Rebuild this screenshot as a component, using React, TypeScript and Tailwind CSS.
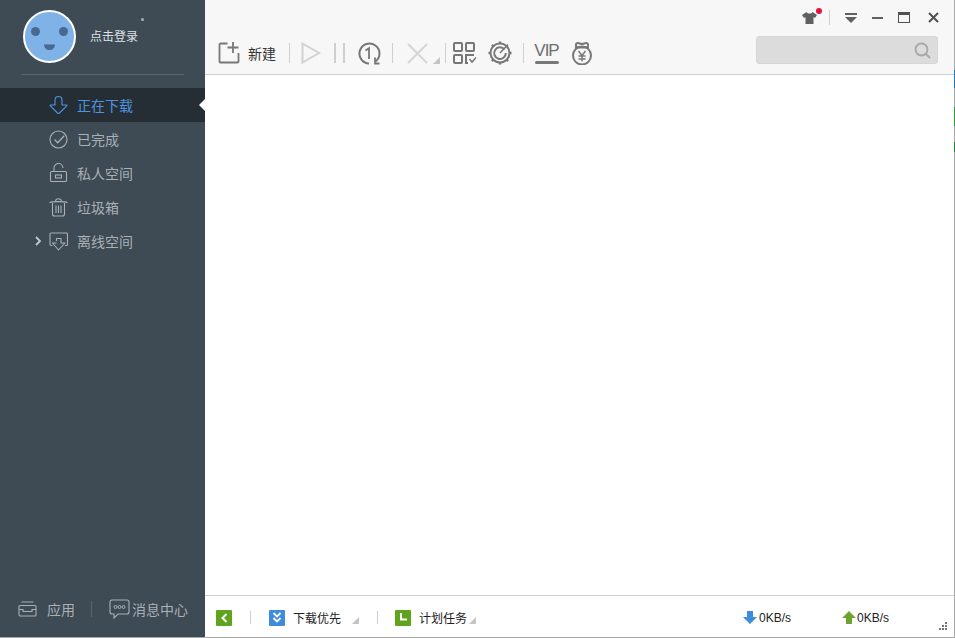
import type { ReactNode } from 'react';

const cjk = { fontFamily: '"Noto Sans CJK SC", "Liberation Sans", sans-serif' };

function Svg({ w, h = w, children, className }: { w: number; h?: number; children: ReactNode; className?: string }) {
  return (
    <svg width={w} height={h} viewBox={`0 0 ${w} ${h}`} fill="none" className={`shrink-0 ${className ?? ''}`}>
      {children}
    </svg>
  );
}

function NavItem({ icon, label, active, arrow }: { icon: ReactNode; label: string; active?: boolean; arrow?: boolean }) {
  return (
    <div className={`relative flex h-[34px] items-center ${active ? 'bg-[#262e35] text-[#4d94e0]' : 'text-[#a9b0b6]'}`}>
      <div className="flex w-[42px] justify-end">
        {arrow && (
          <Svg w={7} h={10}>
            <path d="M1 1l4 4-4 4" stroke="#c3c8cc" strokeWidth="1.800" />
          </Svg>
        )}
      </div>
      <div className="ml-[7px] flex w-[28px] items-center">{icon}</div>
      <span className="-mt-px text-[14px] leading-none">{label}</span>
      {active && (
        <span className="absolute right-0 top-[11px] h-0 w-0 border-y-[6px] border-r-[6px] border-y-transparent border-r-white" />
      )}
    </div>
  );
}

function Sep({ className }: { className?: string }) {
  return <span className={`h-[20px] w-px shrink-0 bg-[#cfcfcf] ${className ?? ''}`} />;
}

function Corner({ className }: { className?: string }) {
  return <span className={`h-0 w-0 shrink-0 border-b-[7px] border-l-[7px] border-b-[#c4c4c4] border-l-transparent ${className ?? ''}`} />;
}

export default function App() {
  return (
    <div className="flex h-[638px] w-[955px] flex-col overflow-hidden bg-white" style={cjk}>
      <div className="flex h-[637px] min-h-0">
        {/* Sidebar */}
        <aside className="flex w-[205px] shrink-0 flex-col bg-[#3e4a54]">
          <div className="relative mx-[21px] flex h-[75px] items-start border-b border-[#5b656e]">
            <div className="ml-[2px] mt-[10px] h-[53px] w-[53px] shrink-0">
              <Svg w={53}>
                <circle cx="26.500" cy="26.500" r="25.500" fill="#7fb3e8" stroke="#fff" strokeWidth="2" />
                <circle cx="12.500" cy="21.500" r="4.500" fill="#47698f" />
                <circle cx="40.500" cy="21.500" r="4.500" fill="#47698f" />
                <path d="M21 34.500h11c0 3.500-2.500 5.500-5.500 5.500S21 38 21 34.500Z" fill="#47698f" />
              </Svg>
            </div>
            <span className="ml-[14px] mt-[29px] text-[12px] leading-[14px] text-[#dfe2e5]">点击登录</span>
            <span className="absolute left-[120px] top-[18px] h-[3px] w-[3px] rounded-full bg-[#a9b0b6]" />
          </div>

          <nav className="mt-[13px] flex flex-col">
            <NavItem
              active
              label="正在下载"
              icon={
                <Svg w={19} h={20}>
                  <path d="M6 10V5a3.500 3.500 0 0 1 7 0v5h4.500c.5 0 .5.500.2.800L10.500 18a1.500 1.500 0 0 1-2 0L1.300 10.800c-.3-.3-.3-.8.2-.8H6Z" stroke="#4d94e0" strokeWidth="1.100" />
                </Svg>
              }
            />
            <NavItem
              label="已完成"
              icon={
                <Svg w={19}>
                  <circle cx="9.500" cy="9.500" r="8.500" stroke="#a9b0b6" strokeWidth="1.100" />
                  <path d="m5.500 9.500 3.200 3.200 6.500-7" stroke="#a9b0b6" strokeWidth="1.300" />
                </Svg>
              }
            />
            <NavItem
              label="私人空间"
              icon={
                <Svg w={19} h={20}>
                  <path d="M2.500 8.500h14a1 1 0 0 1 1 1v8a1 1 0 0 1-1 1h-14a1 1 0 0 1-1-1v-8a1 1 0 0 1 1-1Z" stroke="#a9b0b6" strokeWidth="1.100" />
                  <path d="M5 8.500V5a4.500 4.500 0 0 1 9 0" stroke="#a9b0b6" strokeWidth="1.100" />
                  <rect x="6.500" y="12" width="6" height="3" stroke="#a9b0b6" strokeWidth="1.100" />
                </Svg>
              }
            />
            <NavItem
              label="垃圾箱"
              icon={
                <Svg w={19} h={20}>
                  <path d="M.5 5.500c3-1.200 15-1.200 18 0M6.500 4C7 1 12 1 12.500 4" stroke="#a9b0b6" strokeWidth="1.100" />
                  <path d="M3.500 6v11a2 2 0 0 0 2 2h8a2 2 0 0 0 2-2V6M7 8.500v7.500M9.500 8.500v7.500M12 8.500v7.500" stroke="#a9b0b6" strokeWidth="1.100" />
                </Svg>
              }
            />
            <NavItem
              arrow
              label="离线空间"
              icon={
                <Svg w={19} h={19}>
                  <path d="M3.500 13.500H2a1 1 0 0 1-1-1V2a1 1 0 0 1 1-1h15.500a1 1 0 0 1 1 1v10.500a1 1 0 0 1-1 1H16" stroke="#a9b0b6" strokeWidth="1.100" />
                  <path d="M7.500 9V6.500H12V11h4l-6.500 7L3.500 11h4" stroke="#a9b0b6" strokeWidth="1.100" strokeLinejoin="round" />
                </Svg>
              }
            />
          </nav>

          <div className="mt-auto flex h-[57px] items-start pt-[18px] text-[14px] leading-[22px] text-[#a9b0b6]">
            <div className="ml-[18px] flex h-[22px] items-center">
              <Svg w={19} h={16}>
                <path d="M3.500 1h12M2 4.500h15a1 1 0 0 1 1 1V14a1 1 0 0 1-1 1H2a1 1 0 0 1-1-1V5.500a1 1 0 0 1 1-1Z" stroke="#a9b0b6" strokeWidth="1.100" />
                <path d="M1 8.500h4v2h9v-2h4" stroke="#a9b0b6" strokeWidth="1.100" />
              </Svg>
            </div>
            <span className="ml-[10px]">应用</span>
            <span className="ml-[16px] mt-[3px] h-[16px] w-px bg-[#5b656e]" />
            <div className="ml-[17px] flex h-[22px] items-center">
              <Svg w={21} h={20}>
                <path d="M3 1h15a2 2 0 0 1 2 2v10a2 2 0 0 1-2 2H9l-4 4v-4H3a2 2 0 0 1-2-2V3a2 2 0 0 1 2-2Z" stroke="#a9b0b6" strokeWidth="1.100" />
                <circle cx="6.500" cy="8" r="1.500" stroke="#a9b0b6" />
                <circle cx="10.500" cy="8" r="1.500" stroke="#a9b0b6" />
                <circle cx="14.500" cy="8" r="1.500" stroke="#a9b0b6" />
              </Svg>
            </div>
            <span className="ml-[2px]">消息中心</span>
          </div>
        </aside>

        {/* Main */}
        <main className="relative flex min-w-0 flex-1 flex-col border-r border-[#a8a8a8]">
          <span className="absolute right-[-1px] top-[70px] h-[18px] w-px bg-[#1a7cb8]" />
          <span className="absolute right-[-1px] top-[107px] h-[19px] w-px bg-[#2a9a3a]" />
          <span className="absolute right-[-1px] top-[142px] h-[10px] w-px bg-[#1f8a3a]" />

          <header className="h-[75px] shrink-0 border-b border-[#cfcfcf] bg-[#f7f7f7]">
            <div className="flex h-[32px] items-center justify-end pr-[15px] pt-[3px]">
              <div className="relative">
                <Svg w={15} h={12}>
                  <path d="M4.500 0 0 3l2 3 1.500-1v7h8V5l1.500 1 2-3L10.500 0C9.500 2 5.500 2 4.500 0Z" fill="#606060" />
                </Svg>
                <span className="absolute right-[-5px] top-[-4px] h-[6px] w-[6px] rounded-full bg-[#e8103c]" />
              </div>
              <span className="ml-[12px] h-[15px] w-px bg-[#cfcfcf]" />
              <Svg w={12} h={10} className="ml-[15px]">
                <rect width="12" height="2" fill="#606060" />
                <path d="M0 4h12L6 10 0 4Z" fill="#606060" />
              </Svg>
              <span className="ml-[15px] h-[2px] w-[11px] bg-[#606060]" />
              <span className="ml-[15px] h-[11px] w-[12px] border-x border-b border-t-[3px] border-[#505050]" />
              <Svg w={11} h={11} className="ml-[18px]">
                <path d="M1 1l9 9M10 1l-9 9" stroke="#505050" strokeWidth="2" />
              </Svg>
            </div>

            <div className="flex h-[42px] items-start">
              <div className="mt-[6px] flex h-[30px] flex-1 items-center pl-[13px]">
                <Svg w={22}>
                  <path d="M9.500 1.500H2.500a1 1 0 0 0-1 1V19.500a1 1 0 0 0 1 1h17a1 1 0 0 0 1-1V11" stroke="#777" strokeWidth="1.800" />
                  <path d="M15 0v11M9.500 5.500h11" stroke="#777" strokeWidth="1.800" />
                </Svg>
                <span className="ml-[8px] text-[14px] leading-none text-[#333]">新建</span>
                <Sep className="ml-[13px]" />
                <Svg w={20} h={22} className="ml-[11px]">
                  <path d="M1.500 1.500 18 11 1.500 20.500Z" stroke="#d2d2d2" strokeWidth="2" />
                </Svg>
                <span className="ml-[13px] h-[20px] w-[2px] bg-[#cfcfcf]" />
                <span className="ml-[7px] h-[20px] w-[2px] bg-[#cfcfcf]" />
                <Svg w={24} h={23} className="ml-[12px]">
                  <path d="M18.500 19.500A10 10 0 1 0 12 21.500" stroke="#777" strokeWidth="2" />
                  <path d="M18 15.500v6h4.500" stroke="#777" strokeWidth="1.800" />
                  <path d="M8.500 8.500l3.500-2.300V17" stroke="#777" strokeWidth="1.800" />
                </Svg>
                <Sep className="ml-[11px]" />
                <Svg w={21} h={21} className="ml-[14px]">
                  <path d="M1 1l19 19M20 1 1 20" stroke="#d6d6d6" strokeWidth="2" />
                </Svg>
                <Corner className="ml-[5px] mt-[14px]" />
                <Sep className="ml-[5px]" />
                <Svg w={24} h={22} className="ml-[7px]">
                  <g stroke="#777" strokeWidth="2">
                    <rect x="1" y="1" width="8" height="8" rx="1" />
                    <rect x="13" y="1" width="8" height="8" rx="1" />
                    <rect x="1" y="13" width="8" height="8" rx="1" />
                    <path d="M21 13h-8v8h2" />
                  </g>
                  <path d="m16.500 17 2.500 3 4-4.500" stroke="#777" strokeWidth="1.500" />
                </Svg>
                <Svg w={24} className="ml-[11px]">
                  <g stroke="#777">
                    <circle cx="12" cy="12" r="9.500" strokeWidth="2" />
                    <path d="M12 .5v2.500M12 21v2.500M.5 12H3M21 12h2.500M3.900 3.900l1.800 1.800M18.300 18.300l1.800 1.800M3.900 20.100l1.800-1.800" strokeWidth="2.500" />
                    <path d="M16.500 8.500a5.800 5.800 0 1 0 1.300 3.500" strokeWidth="2" />
                    <path d="M12 12l8-8.500" strokeWidth="1.500" />
                  </g>
                </Svg>
                <Sep className="ml-[11px]" />
                <div className="ml-[10px] flex w-[25px] flex-col items-center pt-px">
                  <span className="text-[17px] leading-[14px] tracking-[-1px] text-[#6e6e6e]" style={{ fontFamily: '"Liberation Sans", sans-serif' }}>
                    VIP
                  </span>
                  <span className="mt-[3px] h-[3px] w-[24px] rounded-full bg-[#777]" />
                </div>
                <Svg w={24} h={23} className="ml-[11px]">
                  <g stroke="#777" strokeWidth="2">
                    <path d="M7.500 5.500C5 4.500 5.500 1 8 1c1.500 0 2.200 1 4 1s2.500-1 4-1c2.500 0 3 3.500.5 4.500" />
                    <path d="M5 5.500h14" />
                    <circle cx="12" cy="13.500" r="9" />
                    <path d="M8.500 9 12 13.500 15.500 9M12 13.500V19.500M8.500 14h7M8.500 17h7" strokeWidth="1.400" />
                  </g>
                </Svg>
              </div>
              <div className="mr-[16px] mt-[4px] flex h-[28px] w-[182px] items-center justify-end rounded-[3px] border border-[#d6d6d6] bg-[#dcdcdc] pr-[6px]">
                <Svg w={17}>
                  <circle cx="7.500" cy="7.500" r="6" stroke="#a8a8a8" strokeWidth="1.800" />
                  <path d="m12 12 4 4" stroke="#a8a8a8" strokeWidth="2" />
                </Svg>
              </div>
            </div>
          </header>

          <div className="min-h-0 flex-1 bg-white" />

          {/* Status bar */}
          <footer className="flex h-[42px] shrink-0 items-center border-t border-[#cfcfcf] bg-white pl-[11px] pr-[5px] pt-[2px] text-[12px] leading-none text-[#222]">
            <span className="flex h-[16px] w-[16px] items-center justify-center rounded-[1px] bg-[#5fa31f]">
              <Svg w={8} h={10}>
                <path d="M6.500 1 2.500 5l4 4" stroke="#fff" strokeWidth="2" />
              </Svg>
            </span>
            <Sep className="ml-[18px] !h-[13px]" />
            <span className="ml-[18px] flex h-[16px] w-[16px] items-center justify-center rounded-[1px] bg-[#3f8bdc]">
              <Svg w={10} h={12}>
                <path d="M1.500 1 5 4.500 8.500 1M1.500 6 5 9.500 8.500 6" stroke="#fff" strokeWidth="1.800" />
              </Svg>
            </span>
            <span className="ml-[8px]">下载优先</span>
            <Corner className="ml-[11px] mt-[5px]" />
            <Sep className="ml-[18px] !h-[13px]" />
            <span className="ml-[17px] flex h-[16px] w-[16px] items-center justify-center rounded-[1px] bg-[#5fa31f]">
              <Svg w={9} h={9}>
                <path d="M2 0v6.500h6" stroke="#fff" strokeWidth="2" />
              </Svg>
            </span>
            <span className="ml-[8px]">计划任务</span>
            <Corner className="ml-[2px] mt-[5px]" />

            <div className="ml-auto flex items-center" style={{ fontFamily: '"Liberation Sans", sans-serif' }}>
              <Svg w={14} h={13}>
                <path d="M4 0h6v6h4l-7 7-7-7h4Z" fill="#3f8bdc" />
              </Svg>
              <span className="ml-[2px] w-[83px]">0KB/s</span>
              <Svg w={14} h={13}>
                <path d="M4 13h6V7h4L7 0 0 7h4Z" fill="#6fa32d" />
              </Svg>
              <span className="ml-px w-[82px]">0KB/s</span>
              <div className="mr-[2px] mt-[16px] grid w-[8px] grid-cols-3 gap-px">
                <i className="col-start-3 h-[2px] w-[2px] bg-[#777]" />
                <i className="col-start-2 h-[2px] w-[2px] bg-[#777]" />
                <i className="h-[2px] w-[2px] bg-[#777]" />
                <i className="h-[2px] w-[2px] bg-[#777]" />
                <i className="h-[2px] w-[2px] bg-[#777]" />
                <i className="h-[2px] w-[2px] bg-[#777]" />
              </div>
            </div>
          </footer>
        </main>
      </div>
      <div className="h-px shrink-0 bg-[#a8a8a8]" />
    </div>
  );
}
